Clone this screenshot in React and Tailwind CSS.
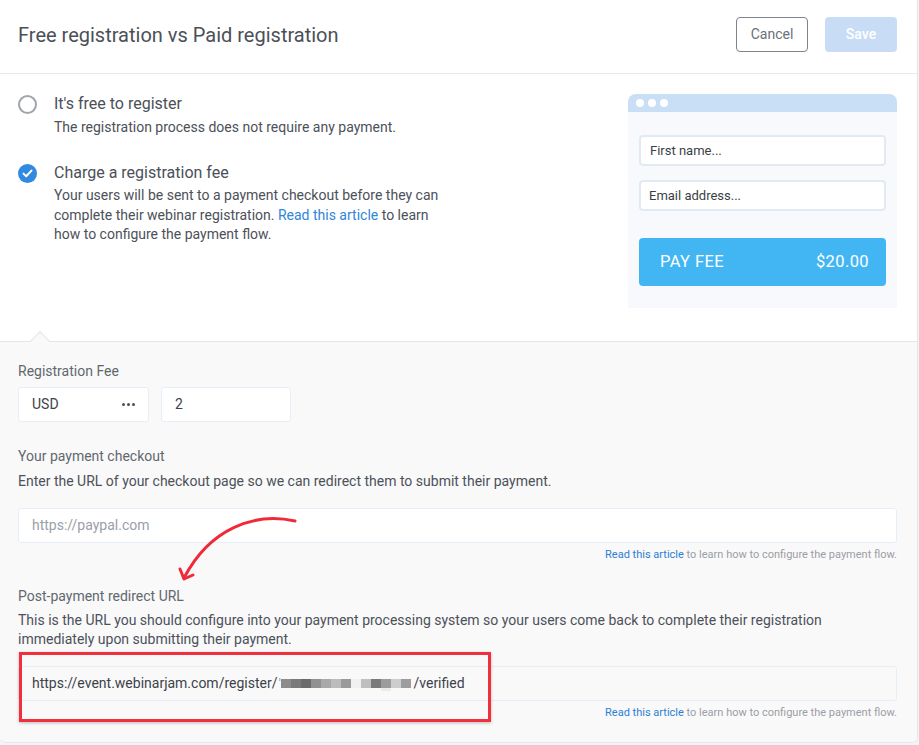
const font = { fontFamily: "Roboto, 'Liberation Sans', sans-serif" };

const HelpLine = () => (
  <p className="mt-[5px] text-right text-[11px] leading-[14px] text-[#9a9ea5]">
    <span className="text-[#2b7fd4]">Read this article</span> to learn how to configure the payment flow.
  </p>
);

const Pixelated = () => {
  const blocks = [
    "#8c8c8c", "#7a7a7a", "#6c6c6c", "#919191", "#a9a9a9", "#bcbcbc", "#9a9a9a",
    "#f1f1f1", "#bfbfbf", "#7b7b7b", "#9c9c9c", "#cdcdcd", "#9d9d9d",
  ];
  return (
    <svg width="132" height="16" viewBox="0 0 132 16" className="mx-[2px]">
      <rect x="0" y="2" width="1.5" height="3" fill="#bbb" />
      {blocks.map((c, i) => (
        <rect key={i} x={2 + i * 10} y="3" width="10" height="9" fill={c} />
      ))}
      <rect x="102" y="12" width="10" height="3" fill="#ececec" />
    </svg>
  );
};

export default function App() {
  return (
    <div className="min-h-screen w-full bg-[#f3f4f8]" style={font}>
      <div className="relative w-[918px] overflow-hidden rounded-br-[6px] rounded-bl-[6px] border-r border-b border-[#e4e6ea] bg-white">
        {/* Header */}
        <div className="flex h-[74px] items-center justify-between border-b border-[#e6e8eb] pb-[4px] pl-[18px] pr-[20px]">
          <h1 className="text-[20px] text-[#4b5058]">Free registration vs Paid registration</h1>
          <div className="flex gap-[17px]">
            <button className="h-[35px] w-[72px] rounded-[4px] border border-[#7d838b] text-[14px] text-[#6b7079]">
              Cancel
            </button>
            <button className="h-[35px] w-[72px] rounded-[4px] bg-[#c8ddf5] text-[14px] font-medium text-white">
              Save
            </button>
          </div>
        </div>

        {/* Options */}
        <div className="flex justify-between pl-[18px] pr-[20px] pt-[20px] h-[267px]">
          <div className="flex flex-col gap-[26px]">
            <div className="flex gap-[17px]">
              <div className="mt-[1px] h-[19px] w-[19px] rounded-full border-2 border-[#a0a5ac]" />
              <div>
                <p className="text-[16px] leading-[20px] text-[#4b5058]">It's free to register</p>
                <p className="mt-[3px] text-[14px] leading-[20px] text-[#4c5159]">
                  The registration process does not require any payment.
                </p>
              </div>
            </div>
            <div className="flex gap-[17px]">
              <div className="mt-[1px] flex h-[19px] w-[19px] items-center justify-center rounded-full bg-[#3189e0]">
                <svg width="11" height="9" viewBox="0 0 11 9" fill="none">
                  <path d="M1.5 4.6 L4.2 7.2 L9.5 1.6" stroke="white" strokeWidth="2" strokeLinecap="round" strokeLinejoin="round" />
                </svg>
              </div>
              <div>
                <p className="text-[16px] leading-[20px] text-[#4b5058]">Charge a registration fee</p>
                <p className="mt-[3px] text-[14px] leading-[19.5px] text-[#4c5159]">
                  Your users will be sent to a payment checkout before they can
                  <br />
                  complete their webinar registration. <span className="text-[#2f86dc]">Read this article</span> to learn
                  <br />
                  how to configure the payment flow.
                </p>
              </div>
            </div>
          </div>

          {/* Preview card */}
          <div className="h-[214px] w-[269px] overflow-hidden rounded-t-[8px] bg-[#f7f9fc]">
            <div className="flex h-[18px] items-center gap-[4px] bg-[#c9dff5] pl-[8px]">
              <span className="h-[8px] w-[8px] rounded-full bg-white" />
              <span className="h-[8px] w-[8px] rounded-full bg-white" />
              <span className="h-[8px] w-[8px] rounded-full bg-white" />
            </div>
            <div className="px-[11px] pt-[23px]">
              <div className="flex h-[31px] items-center rounded-[4px] border-2 border-[#e1e9f2] bg-white pl-[9px] text-[13px] text-[#3a3f47]">
                First name...
              </div>
              <div className="mt-[14px] flex h-[31px] items-center rounded-[4px] border-2 border-[#e1e9f2] bg-white pl-[8px] text-[13px] text-[#3a3f47]">
                Email address...
              </div>
              <div className="mt-[27px] flex h-[48px] items-center justify-between rounded-[4px] bg-[#42b6f3] pl-[21px] pr-[17px] text-[16.5px] tracking-[0.4px] text-white">
                <span>PAY FEE</span>
                <span>$20.00</span>
              </div>
            </div>
          </div>
        </div>

        {/* Payment details */}
        <div className="relative border-t border-[#e3e5e8] bg-[#f9f9f9] pl-[18px] pr-[20px] pt-[19px] pb-[22px]">
          <div className="absolute left-[33px] top-[-8px] h-[14px] w-[14px] rotate-45 border-t border-l border-[#e3e5e8] bg-[#f9f9f9]" />

          <p className="relative text-[14px] leading-[20px] text-[#62676e]">Registration Fee</p>
          <div className="mt-[6px] flex gap-[12px]">
            <div className="flex h-[35px] w-[131px] items-center justify-between rounded-[3px] border border-[#e6eef8] bg-white pl-[13px] pr-[13px] text-[14px] text-[#3d424a]">
              <span>USD</span>
              <span className="flex gap-[2px]">
                <span className="h-[3px] w-[3px] rounded-full bg-[#4a4f57]" />
                <span className="h-[3px] w-[3px] rounded-full bg-[#4a4f57]" />
                <span className="h-[3px] w-[3px] rounded-full bg-[#4a4f57]" />
              </span>
            </div>
            <div className="flex h-[35px] w-[130px] items-center rounded-[3px] border border-[#e6eef8] bg-white pl-[13px] text-[14px] text-[#3d424a]">
              2
            </div>
          </div>

          <p className="mt-[24px] text-[14px] leading-[20px] text-[#62676e]">Your payment checkout</p>
          <p className="mt-[5px] text-[14px] leading-[20px] text-[#4c5159]">
            Enter the URL of your checkout page so we can redirect them to submit their payment.
          </p>
          <div className="mt-[17px] flex h-[35px] items-center rounded-[3px] border border-[#e6eef8] bg-white pl-[13px] text-[14px] text-[#9aa0a6]">
            https://paypal.com
          </div>
          <HelpLine />

          <p className="mt-[24px] text-[14px] leading-[20px] text-[#62676e]">Post-payment redirect URL</p>
          <p className="mt-[5px] text-[14px] leading-[19px] text-[#4c5159]">
            This is the URL you should configure into your payment processing system so your users come back to complete their registration
            <br />
            immediately upon submitting their payment.
          </p>
          <div className="mt-[17px] flex h-[35px] items-center rounded-[3px] border border-[#e6eef8] bg-[#f9f9f9] pl-[13px] text-[14px] text-[#3d424a]">
            <span>https://event.webinarjam.com/register/</span>
            <Pixelated />
            <span>/verified</span>
          </div>
          <HelpLine />
        </div>

        {/* Annotations */}
        <div className="pointer-events-none absolute left-[19px] top-[652px] h-[70px] w-[472px] border-[3px] border-[#f0303d] shadow-[0_1px_3px_rgba(0,0,0,0.25)]" />
        <svg className="pointer-events-none absolute left-0 top-0" width="918" height="745" viewBox="0 0 918 745" fill="none">
          <path d="M295 521 C255 512 210 528 184 578" stroke="#ef2b3a" strokeWidth="3" strokeLinecap="round" />
          <path d="M180 569 L184 579 L193 575" stroke="#ef2b3a" strokeWidth="3" strokeLinecap="round" strokeLinejoin="round" />
        </svg>
      </div>
    </div>
  );
}
